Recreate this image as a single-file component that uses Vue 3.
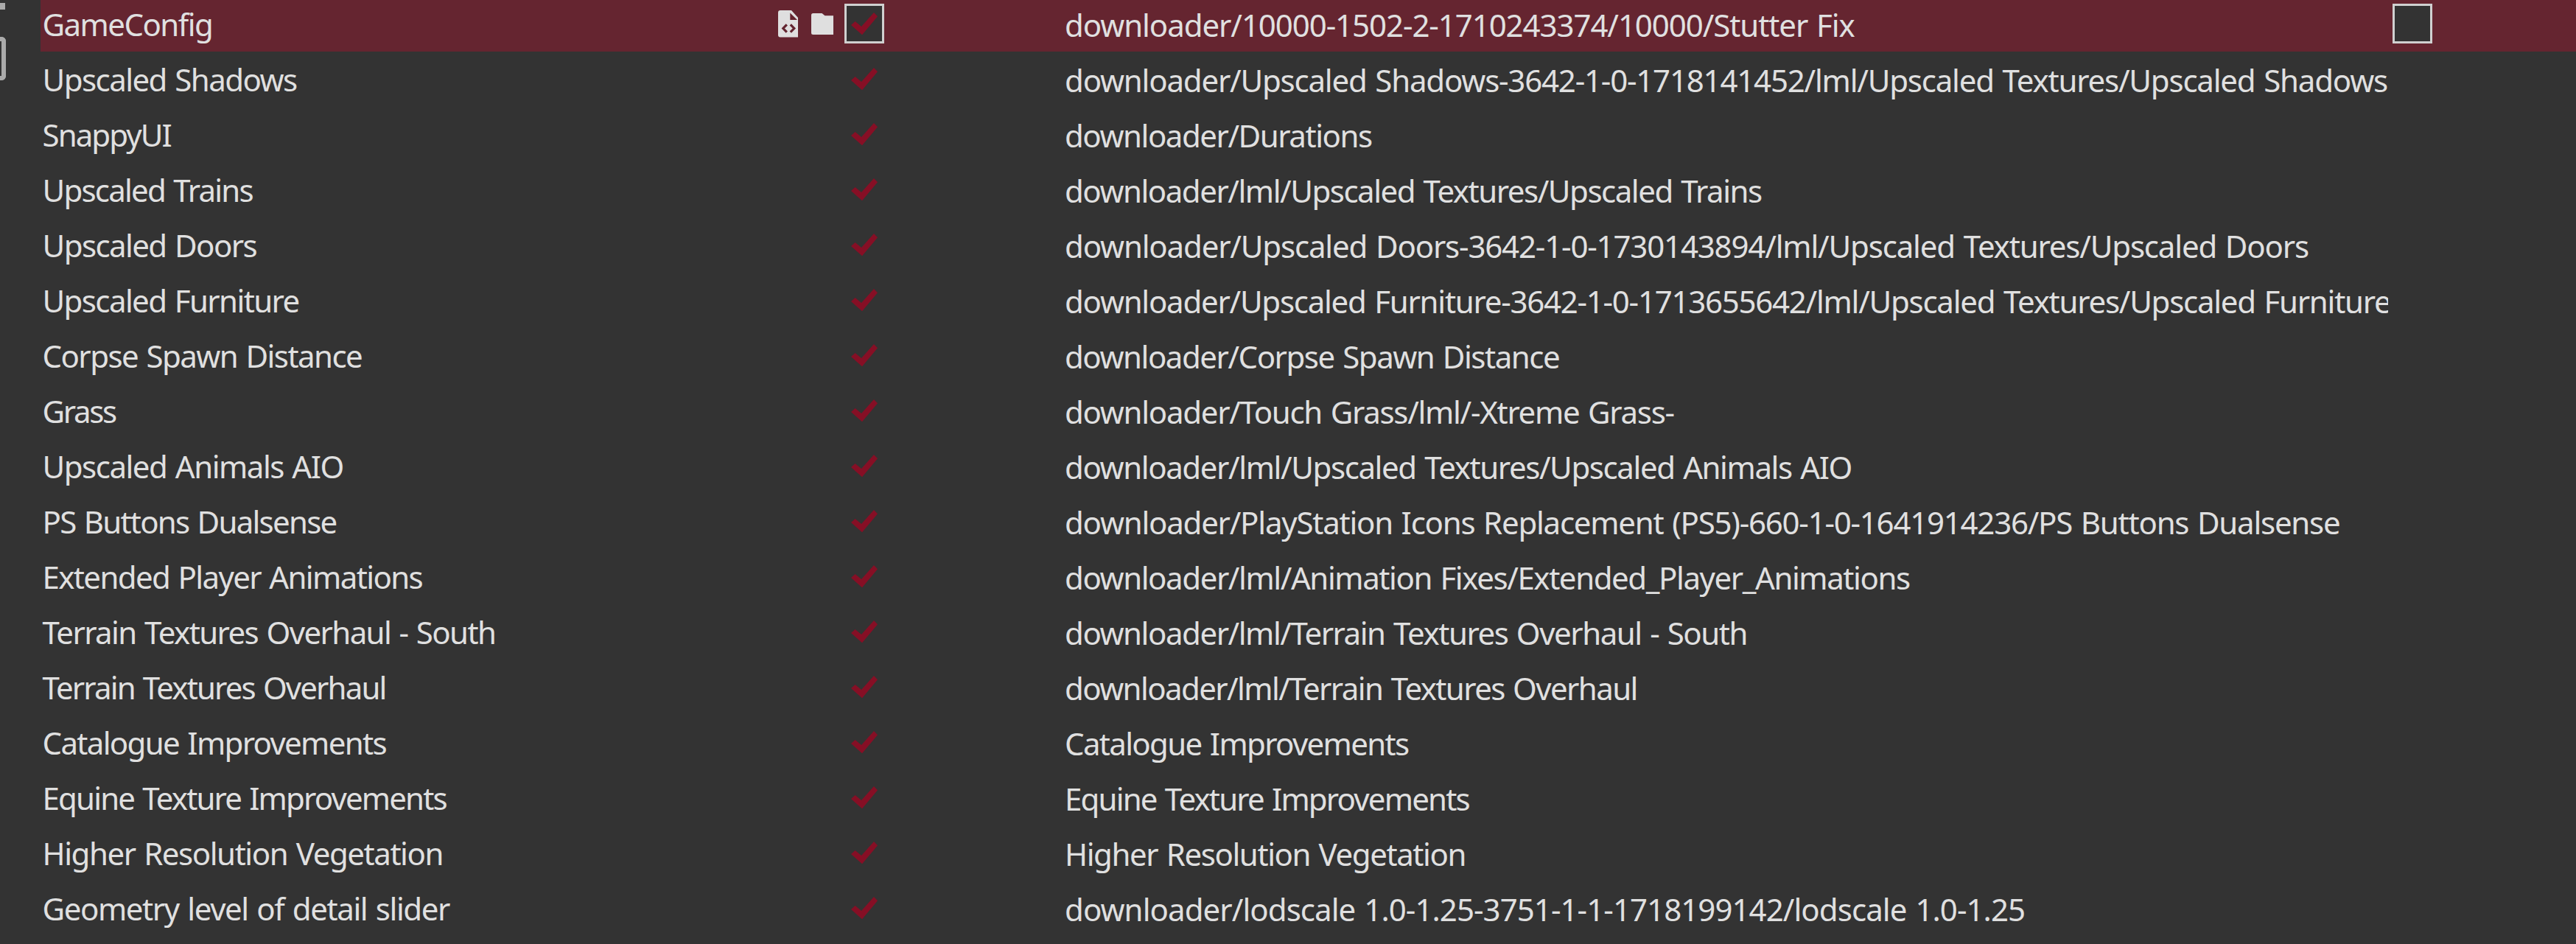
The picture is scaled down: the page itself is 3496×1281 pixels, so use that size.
<script setup>
const p = 'downloader/'
// [name, right edge of name, path, right edge of path]
const data = [
  ['GameConfig', 287, p + '10000-1502-2-1710243374/10000/Stutter Fix', 2517.6],
  ['Upscaled Shadows', 403, p + 'Upscaled Shadows-3642-1-0-1718141452/lml/Upscaled Textures/Upscaled Shadows', 3240],
  ['SnappyUI', 232.5, p + 'Durations', 1862],
  ['Upscaled Trains', 343.5, p + 'lml/Upscaled Textures/Upscaled Trains', 2391],
  ['Upscaled Doors', 348.5, p + 'Upscaled Doors-3642-1-0-1730143894/lml/Upscaled Textures/Upscaled Doors', 3133],
  ['Upscaled Furniture', 405.5, p + 'Upscaled Furniture-3642-1-0-1713655642/lml/Upscaled Textures/Upscaled Furniture', 3244],
  ['Corpse Spawn Distance', 491, p + 'Corpse Spawn Distance', 2116],
  ['Grass', 158, p + 'Touch Grass/lml/-Xtreme Grass-', 2271.5],
  ['Upscaled Animals AIO', 465.5, p + 'lml/Upscaled Textures/Upscaled Animals AIO', 2512.5],
  ['PS Buttons Dualsense', 456.5, p + 'PlayStation Icons Replacement (PS5)-660-1-0-1641914236/PS Buttons Dualsense', 3175],
  ['Extended Player Animations', 573.5, p + 'lml/Animation Fixes/Extended_Player_Animations', 2592],
  ['Terrain Textures Overhaul - South', 671, p + 'lml/Terrain Textures Overhaul - South', 2369.5],
  ['Terrain Textures Overhaul', 522.5, p + 'lml/Terrain Textures Overhaul', 2220.5],
  ['Catalogue Improvements', 524.5, 'Catalogue Improvements', 1912],
  ['Equine Texture Improvements', 606.5, 'Equine Texture Improvements', 1994.5],
  ['Higher Resolution Vegetation', 599.5, 'Higher Resolution Vegetation', 1987.5],
  ['Geometry level of detail slider', 611, p + 'lodscale 1.0-1.25-3751-1-1-1718199142/lodscale 1.0-1.25', 2747],
]

const WORD_GAP = 2
const ctx = document.createElement('canvas').getContext('2d')
ctx.font = '42px "Noto Sans", sans-serif'

function fit(text, left, right) {
  const ink = ctx.measureText(text).actualBoundingBoxRight
  const gaps = (text.split(' ').length - 1) * WORD_GAP
  return ((right - left - ink - gaps) / (text.length - 1)).toFixed(3) + 'px'
}

const rows = data.map(([name, nameEnd, path, pathEnd], i) => ({
  name,
  path,
  selected: i === 0,
  nameSpacing: fit(name, 57.5, nameEnd),
  pathSpacing: fit(path, 1445, pathEnd),
}))
</script>

<template>
  <main class="page">
    <aside class="rail">
      <i class="rail-bar"></i>
      <i class="rail-box"></i>
    </aside>
    <section class="list">
      <div v-for="r in rows" :key="r.name" class="row" :class="{ selected: r.selected }">
        <div class="name"><span :style="{ letterSpacing: r.nameSpacing }">{{ r.name }}</span></div>
        <div class="actions">
          <template v-if="r.selected">
            <svg class="file" width="27" height="37" viewBox="0 0 27 37">
              <path fill="#dfdfdf" fill-rule="evenodd" d="M3 0H18L27 10V36.5H3Q0 36.5 0 33.5V3Q0 0 3 0ZM16.3 3.6V13H26Z" />
              <path fill="none" stroke="#632530" stroke-width="3.2" d="M11.8 19.3L6.8 24.5L11.8 29.7M16.8 19.3L21.8 24.5L16.8 29.7" />
            </svg>
            <svg class="folder" width="30" height="29" viewBox="0 0 30 29">
              <path fill="#dfdfdf" d="M2.5 0H14.5L18.5 3.3H30V29H2.5Q0 29 0 26.5V2.5Q0 0 2.5 0Z" />
            </svg>
          </template>
        </div>
        <div class="box" :class="{ framed: r.selected }">
          <svg width="36" height="30" viewBox="0 0 36 30">
            <path fill="#860f25" d="M0 17L5.6 12L14 19L31 0L36 5.2L15 30.3Z" />
          </svg>
        </div>
        <div class="path"><span :style="{ letterSpacing: r.pathSpacing }">{{ r.path }}</span></div>
        <div v-if="r.selected" class="box framed end"></div>
      </div>
    </section>
  </main>
</template>

<style>
body { margin: 0; background: #333333; }
</style>

<style scoped>
.page {
  display: flex;
  width: 3496px;
  height: 1281px;
  overflow: hidden;
  background: #333333;
  color: #e0e0e0;
  font: 42px/75px "Noto Sans", sans-serif;
  word-spacing: 2px;
}
.rail { width: 55px; flex: none; }
.rail-bar { display: block; width: 7px; height: 9px; margin-top: 4px; background: #ababab; }
.rail-box {
  display: block;
  box-sizing: border-box;
  width: 8px;
  height: 59px;
  margin-top: 37px;
  border: 6px solid #ababab;
  border-left: 0;
  border-radius: 0 6px 6px 0;
}
.list { flex: 1; margin-top: -5px; }
.row { display: flex; align-items: center; height: 75px; white-space: nowrap; }
.selected { background: #652530; }
.name { box-sizing: border-box; width: 1001px; padding-left: 2.5px; flex: none; }
.actions { display: flex; align-items: center; width: 90px; height: 75px; flex: none; }
.folder { margin-left: 18px; }
.box {
  display: flex;
  align-items: center;
  justify-content: center;
  box-sizing: border-box;
  width: 54px;
  height: 54px;
  margin-bottom: 1px;
  flex: none;
}
.framed { border: 3px solid #d0d0d0; background: #333333; }
.path {
  box-sizing: border-box;
  width: 2041px;
  height: 75px;
  padding: 1px 0 0 245px;
  overflow: hidden;
  flex: none;
}
.end { margin-left: 6px; }
</style>
